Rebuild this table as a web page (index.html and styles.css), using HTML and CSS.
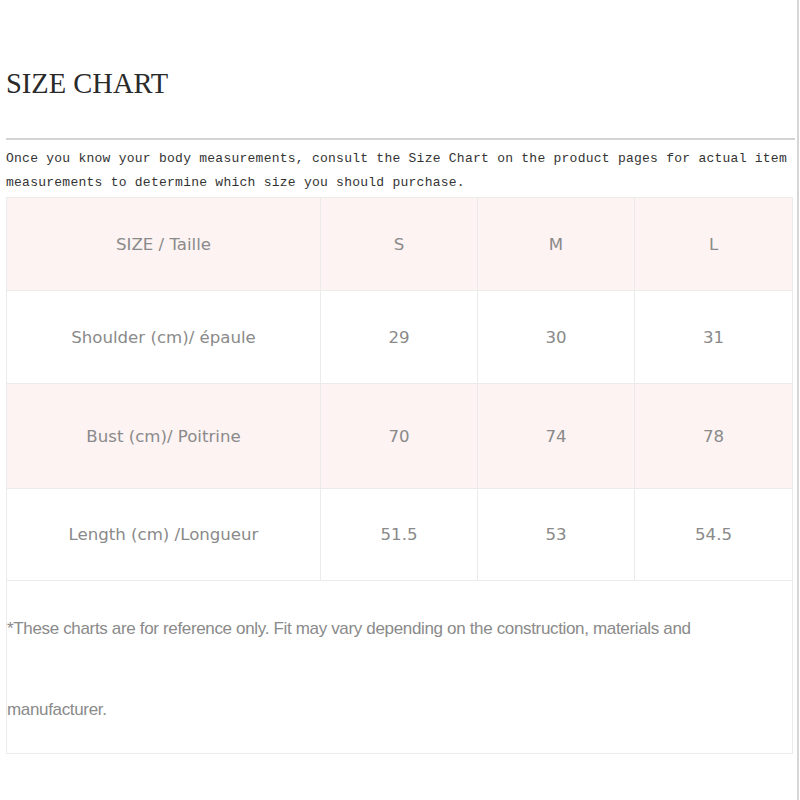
FILE: index.html
```html
<!DOCTYPE html>
<html lang="en">
<head>
<meta charset="utf-8">
<title>Size Chart</title>
<link rel="stylesheet" href="styles.css">
</head>
<body>
<div class="page">
  <h1 class="title">SIZE CHART</h1>
  <div class="rule"></div>
  <p class="intro">Once you know your body measurements, consult the Size Chart on the product pages for actual item measurements to determine which size you should purchase.</p>
  <table class="chart">
    <colgroup>
      <col class="c1"><col class="c2"><col class="c3"><col class="c4">
    </colgroup>
    <tr class="r1 pink"><td>SIZE / Taille</td><td>S</td><td>M</td><td>L</td></tr>
    <tr class="r2"><td>Shoulder (cm)/ épaule</td><td>29</td><td>30</td><td>31</td></tr>
    <tr class="r3 pink"><td>Bust (cm)/ Poitrine</td><td>70</td><td>74</td><td>78</td></tr>
    <tr class="r4"><td>Length (cm) /Longueur</td><td>51.5</td><td>53</td><td>54.5</td></tr>
    <tr class="note"><td colspan="4">*These charts are for reference only. Fit may vary depending on the construction, materials and<br>manufacturer.</td></tr>
  </table>
</div>
</body>
</html>
```
FILE: styles.css
```css
html, body {
  margin: 0;
  padding: 0;
  background: #ffffff;
}
.page {
  box-sizing: border-box;
  width: 799px;
  min-height: 800px;
  padding: 68px 0 0 6px;
  border-right: 2px solid #d6d6d6;
}
.title {
  margin: 0;
  font-family: "Liberation Serif", "Times New Roman", serif;
  font-weight: normal;
  font-size: 28.5px;
  line-height: 32px;
  color: #2a2a2a;
}
.rule {
  margin: 38px 2px 0 0;
  height: 2px;
  background: #d4d4d4;
}
.intro {
  margin: 7px 0 2px 0;
  font-family: "Liberation Mono", "Courier New", monospace;
  font-size: 13px;
  letter-spacing: 0.25px;
  line-height: 24px;
  color: #333333;
}
.chart {
  border-collapse: collapse;
  width: 786px;
  table-layout: fixed;
  font-family: "DejaVu Sans", Verdana, sans-serif;
  font-size: 16.6px;
  color: #8a8a8a;
}
.c1 { width: 314px; }
.c2 { width: 157px; }
.c3 { width: 157px; }
.c4 { width: 158px; }
.chart td {
  border: 1px solid #ebebeb;
  text-align: center;
  vertical-align: middle;
  padding: 0;
}
.pink td { background: #fdf3f3; }
.r1 td { height: 92px; }
.r2 td { height: 92px; }
.r3 td { height: 104px; }
.r4 td { height: 91px; }
.note td {
  text-align: left;
  font-family: "Liberation Sans", Arial, sans-serif;
  font-size: 17px;
  letter-spacing: -0.34px;
  line-height: 81px;
  padding: 7px 0 3px 0;
  color: #8a8a8a;
}
```
